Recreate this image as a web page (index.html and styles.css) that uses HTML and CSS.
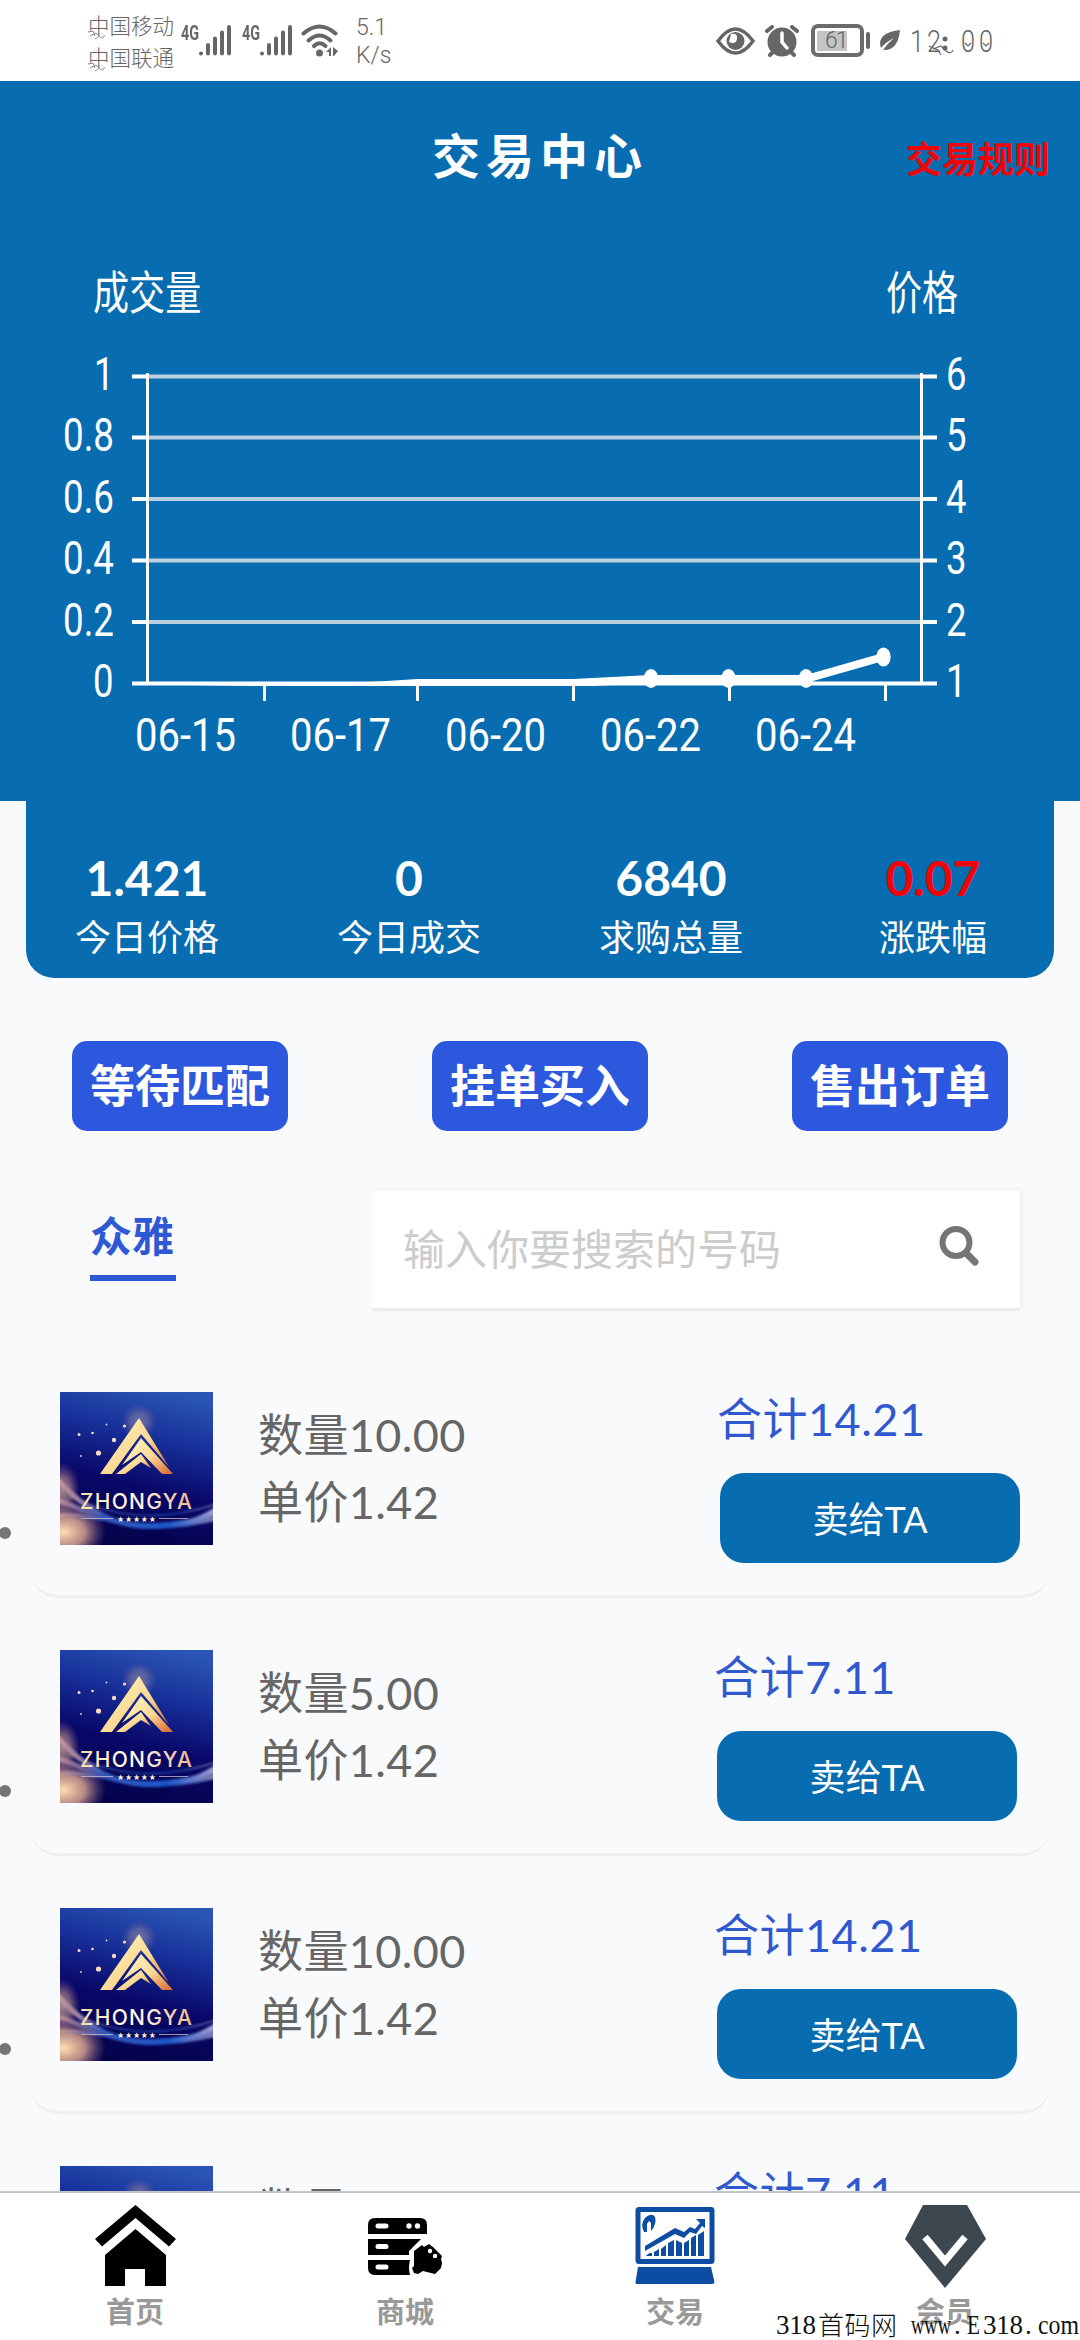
FILE: index.html
```html
<!DOCTYPE html>
<html lang="zh-CN">
<head>
<meta charset="utf-8">
<title>交易中心</title>
<link rel="stylesheet" href="styles.css">
</head>
<body>
<svg class="defs" width="0" height="0" aria-hidden="true">
  <defs>
    <linearGradient id="sky" x1="0.7" y1="0" x2="0.45" y2="1">
      <stop offset="0" stop-color="#2a55b4"/><stop offset=".3" stop-color="#17309a"/>
      <stop offset=".62" stop-color="#090869"/><stop offset="1" stop-color="#04034a"/>
    </linearGradient>
    <linearGradient id="gold" x1="0" y1="0" x2="1" y2="1">
      <stop offset="0" stop-color="#fff6c4"/><stop offset=".55" stop-color="#fbd992"/><stop offset="1" stop-color="#d9622f"/>
    </linearGradient>
    <linearGradient id="word" x1="0" y1="0" x2="1" y2="0">
      <stop offset="0" stop-color="#f3dfa0"/><stop offset=".45" stop-color="#fffdf2"/><stop offset="1" stop-color="#f2b98c"/>
    </linearGradient>
    <linearGradient id="wave" x1="0" y1="0" x2="1" y2="0">
      <stop offset="0" stop-color="#d99b94"/><stop offset=".3" stop-color="#3357b8"/>
      <stop offset=".7" stop-color="#1c57c8"/><stop offset="1" stop-color="#a9a0cf"/>
    </linearGradient>
    <radialGradient id="glow">
      <stop offset="0" stop-color="#ffe0b0"/><stop offset=".5" stop-color="#e2ab92" stop-opacity=".8"/>
      <stop offset="1" stop-color="#a06a90" stop-opacity="0"/>
    </radialGradient>
    <filter id="soft" x="-20%" y="-50%" width="140%" height="200%"><feGaussianBlur stdDeviation="1.3"/></filter>
    <symbol id="logo" viewBox="0 0 153 153">
      <rect width="153" height="153" fill="url(#sky)"/>
      <circle cx="79" cy="30" r="18" fill="url(#glow)" opacity=".35"/>
      <ellipse cx="2" cy="98" rx="18" ry="28" fill="url(#glow)" opacity=".6"/>
      <ellipse cx="4" cy="140" rx="42" ry="30" fill="url(#glow)"/>
      <g fill="none" stroke="url(#wave)" filter="url(#soft)">
        <path d="M-4 86C24 118 60 138 98 134S138 128 157 117" stroke-width="5"/>
        <path d="M-4 108C28 116 62 150 157 126" stroke-width="5" opacity=".8"/>
        <path d="M-4 124C34 118 82 148 157 121" stroke-width="3"/>
        <path d="M10 104C50 124 96 132 157 112" stroke-width="1.5" opacity=".7"/>
      </g>
      <g fill="#f5d9c0">
        <circle cx="54" cy="48" r="2.200"/><circle cx="38.500" cy="61" r="2.600"/><circle cx="19" cy="42.500" r="1.500"/>
        <circle cx="32.500" cy="41" r="1.300"/><circle cx="46.500" cy="32.500" r=".9"/><circle cx="64.500" cy="34" r="1.600"/><circle cx="21" cy="64" r=".9"/>
      </g>
      <path d="M79 26 40 82H52L81 42 109 75Z" fill="url(#gold)"/>
      <path d="M81 46 62 73 81 60 102 82H113Z" fill="url(#gold)"/>
      <path d="M56 82 81 62 91 76 81 70 65 82Z" fill="url(#gold)"/>
      <text x="20" y="117" class="logo-word" textLength="112" fill="url(#word)">ZHONGYA</text>
      <path d="M21 126.500H53M99 126.500H128" stroke="#c9b7c4" stroke-width=".8"/>
      <text x="57" y="130" class="logo-stars" textLength="39">★★★★★</text>
    </symbol>
    <symbol id="signal" viewBox="0 0 33 32">
      <path d="M3 28.500V28.600M10 20V28.600M17 13.500V28.600M24 7.500V28.600M31 2V28.600" fill="none" stroke="#666" stroke-width="4" stroke-linecap="round"/>
    </symbol>
  </defs>
</svg>

<div class="screen">
  <header class="status">
    <div class="carriers"><span>中国移动</span><span>中国联通</span>
      <svg class="flourish" width="22" height="62" viewBox="0 0 22 62"><path id="f" d="M1 19l5-1 2 5M3 23l6-3 3 3c2 3 6 2 5-1M8 26l3-2" fill="none" stroke="#888" stroke-width="1"/><use href="#f" y="32"/></svg>
    </div>
    <span class="gen">4G</span><svg class="signal" width="33" height="32"><use href="#signal"/></svg>
    <span class="gen second">4G</span><svg class="signal" width="33" height="32"><use href="#signal"/></svg>
    <svg class="wifi" width="38" height="33" viewBox="0 0 38 33">
      <g fill="none" stroke="#666" stroke-width="4" stroke-linecap="round"><path d="M2.500 9.500Q18.500-4.500 34.500 9.500"/><path d="M7.500 16.500Q18.500 6.500 29.500 16.500"/><path d="M13 22Q18.500 16.500 24.500 22"/></g>
      <circle cx="18.500" cy="29" r="3.500" fill="#666"/><path d="M25 28l5-5v9h-2v-4zM32 23l5 4-4 5h-1z" fill="#666"/>
    </svg>
    <div class="rate"><span>5.1</span><span>K/s</span></div>
    <svg class="eye" width="39" height="28" viewBox="0 0 39 28"><path d="M2 14Q19.500-10 37 14 19.500 38 2 14Z" fill="none" stroke="#666" stroke-width="3.500"/><circle cx="19.500" cy="14" r="9" fill="#666"/><path d="M15 7q7-1 6 5-1 6-8 3" fill="#fff"/></svg>
    <svg class="alarm" width="34" height="32" viewBox="0 0 34 32"><circle cx="17" cy="17" r="14.500" fill="#666"/><path d="M2 6l5-4M32 6l-5-4M5 30l4-4M29 30l-4-4" stroke="#666" stroke-width="4" stroke-linecap="round"/><path d="M17 8v9l5 6" fill="none" stroke="#fff" stroke-width="3.500" stroke-linecap="round"/></svg>
    <div class="battery"><span>61</span></div><i class="nub"></i>
    <svg class="leaf" width="22" height="23" viewBox="0 0 22 23"><path d="M21 1Q19 22 4 21 9 14 15 9 7 13 2 19-3 4 21 1Z" fill="#666"/></svg>
    <svg class="clock" width="90" height="40" viewBox="0 0 90 40">
      <g class="time"><text x="0" y="31" textLength="14" lengthAdjust="spacingAndGlyphs">1</text><text x="17" y="31" textLength="14" lengthAdjust="spacingAndGlyphs">2</text><text x="51" y="31" textLength="14" lengthAdjust="spacingAndGlyphs">0</text><text x="69" y="31" textLength="14" lengthAdjust="spacingAndGlyphs">0</text></g>
      <circle cx="35" cy="18" r="2.500" fill="#666"/><circle cx="35" cy="27" r="2.500" fill="#666"/>
      <path d="M19 25l9 4 3 5M23 28l8-3 5 5q5 4 7-1M55 22l3 3 3-3M73 22l3 3 3-3" fill="none" stroke="#666" stroke-width="1.200"/>
    </svg>
  </header>

  <main class="content">
    <section class="hero">
      <div class="title-row"><h1>交易中心</h1><a class="rules">交易规则</a></div>
      <svg class="chart" width="1080" height="572" viewBox="0 229 1080 572">
        <g transform="translate(93 309) scale(.785 1)"><text class="cjk">成交量</text></g>
        <g transform="translate(886 309) scale(.785 1)"><text class="cjk">价格</text></g>
        <path class="grid" d="M149 376.500H920M149 437.500H920M149 499H920M149 560.500H920M149 622H920"/>
        <path class="axis" d="M132 376.500H148M132 437.500H148M132 499H148M132 560.500H148M132 622H148M132 683.500H937M921 376.500H937M921 437.500H937M921 499H937M921 560.500H937M921 622H937"/>
        <path class="axis thin" d="M147.500 373V684M921.500 373V684M264.500 684V701M417.500 684V701M573.500 684V701M729.500 684V701M885.500 684V701"/>
        <clipPath id="plot"><rect x="149" y="373" width="772" height="313"/></clipPath>
        <path class="line" clip-path="url(#plot)" d="M186 690 340 688 418 683H573L651 679H806L883 657"/>
        <g fill="#fff"><ellipse cx="651" cy="678.500" rx="7.200" ry="9.500"/><ellipse cx="728.500" cy="678.500" rx="7.200" ry="9.500"/><ellipse cx="806" cy="678.500" rx="7.200" ry="9.500"/><ellipse cx="883.500" cy="657" rx="7.200" ry="9.500"/></g>
        <g class="num">
          <text x="94" y="389.500" textLength="20" lengthAdjust="spacingAndGlyphs">1</text>
          <text x="63" y="451" textLength="51" lengthAdjust="spacingAndGlyphs">0.8</text>
          <text x="63" y="512.500" textLength="51" lengthAdjust="spacingAndGlyphs">0.6</text>
          <text x="63" y="574" textLength="51" lengthAdjust="spacingAndGlyphs">0.4</text>
          <text x="63" y="635.500" textLength="51" lengthAdjust="spacingAndGlyphs">0.2</text>
          <text x="93" y="697" textLength="20.500" lengthAdjust="spacingAndGlyphs">0</text>
          <text x="946" y="389.500" textLength="20.500" lengthAdjust="spacingAndGlyphs">6</text>
          <text x="946" y="451" textLength="20.500" lengthAdjust="spacingAndGlyphs">5</text>
          <text x="946" y="512.500" textLength="20.500" lengthAdjust="spacingAndGlyphs">4</text>
          <text x="946" y="574" textLength="20.500" lengthAdjust="spacingAndGlyphs">3</text>
          <text x="946" y="635.500" textLength="20.500" lengthAdjust="spacingAndGlyphs">2</text>
          <text x="946" y="697" textLength="20.500" lengthAdjust="spacingAndGlyphs">1</text>
          <text x="135" y="751" textLength="101" lengthAdjust="spacingAndGlyphs">06-15</text>
          <text x="290" y="751" textLength="101" lengthAdjust="spacingAndGlyphs">06-17</text>
          <text x="445" y="751" textLength="101" lengthAdjust="spacingAndGlyphs">06-20</text>
          <text x="600" y="751" textLength="101" lengthAdjust="spacingAndGlyphs">06-22</text>
          <text x="755" y="751" textLength="101" lengthAdjust="spacingAndGlyphs">06-24</text>
        </g>
      </svg>
    </section>

    <section class="stats">
      <div><b>1.421</b><span>今日价格</span></div>
      <div><b>0</b><span>今日成交</span></div>
      <div><b>6840</b><span>求购总量</span></div>
      <div><b class="up">0.07</b><span>涨跌幅</span></div>
    </section>

    <nav class="actions"><a>等待匹配</a><a>挂单买入</a><a>售出订单</a></nav>

    <section class="filter">
      <span class="tab">众雅</span>
      <div class="search"><span>输入你要搜索的号码</span>
        <svg width="42" height="42" viewBox="0 0 42 42" fill="none" stroke="#757575"><circle cx="18" cy="17.500" r="13.500" stroke-width="6"/><path d="M28 28l9 9" stroke-width="7" stroke-linecap="round"/></svg>
      </div>
    </section>

    <ul class="orders">
      <li><svg class="logo" width="153" height="153"><use href="#logo"/></svg>
        <div class="info"><span>数量10.00</span><span>单价1.42</span></div>
        <div class="deal"><span>合计14.21</span><a>卖给TA</a></div></li>
      <li><svg class="logo" width="153" height="153"><use href="#logo"/></svg>
        <div class="info"><span>数量5.00</span><span>单价1.42</span></div>
        <div class="deal"><span>合计7.11</span><a>卖给TA</a></div></li>
      <li><svg class="logo" width="153" height="153"><use href="#logo"/></svg>
        <div class="info"><span>数量10.00</span><span>单价1.42</span></div>
        <div class="deal"><span>合计14.21</span><a>卖给TA</a></div></li>
      <li><svg class="logo" width="153" height="153"><use href="#logo"/></svg>
        <div class="info"><span>数量5.00</span><span>单价1.42</span></div>
        <div class="deal"><span>合计7.11</span><a>卖给TA</a></div></li>
    </ul>
  </main>

  <nav class="tabbar">
    <a><svg width="90" height="90" viewBox="0 0 90 90"><path d="M45.500 5 86 39 79 46.500 45.500 18 12 46.500 5 39Z"/><path d="M45.500 29 76 55V86H55V69H35V86H15V55Z"/></svg><span>首页</span></a>
    <a><svg width="90" height="90" viewBox="0 0 90 90">
      <path d="M15 18h45q7 0 7 7v9H8v-9q0-7 7-7zM8 39h53L49 51v4H8zM8 60h42q-2 8 0 15H15q-7 0-7-7z"/>
      <path d="M54 51l8-6 2 2 5-3 4 3 9 9-1 3 1 4-1 5-6 6-12-3-5 3-4-1-2-5 2-2z"/>
      <path d="M18 26h8M18 46.500h8M18 67h8" stroke="#fff" stroke-width="5" stroke-linecap="round"/>
      <g fill="#fff"><circle cx="49" cy="26" r="2.700"/><circle cx="57.500" cy="26" r="2.700"/><circle cx="70" cy="51" r="2.200"/><circle cx="75" cy="56" r="2.200"/></g></svg><span>商城</span></a>
    <a><svg width="90" height="90" viewBox="0 0 90 90" fill="#0c4ca3">
      <rect x="8" y="9.500" width="74" height="52" rx="1" fill="none" stroke="#0c4ca3" stroke-width="5"/>
      <path d="M8 67H81L84.500 82Q84.500 84 82 84H7Q5 84 5.500 82Z"/>
      <path d="M14 32Q10 24 15 18 22 12 25 17 27 24 21 31V23L19 21 17 24V32Z"/>
      <path d="M15 46 45 28 54 32 60 27 65 29 70 23 66 19H75V28L72 26 66 34 60 32 54 38 45 34 15 51Z"/>
      <path d="M16 56q4-4 6-3v3zM24 52l5-3v7h-5zM31 49l5-4v11h-5zM38 43l6-3v16h-6zM46 40l6 3v13h-6zM54 43l5-3v16h-5zM61 38l5-3v21h-5zM68 35l6-4v25h-6z"/></svg><span>交易</span></a>
    <a><svg width="90" height="90" viewBox="0 0 90 90"><path d="M23 5H67L86 39 45 88 5 39Z" fill="#3c474f"/><path d="M25 37 45 61 65 37" fill="none" stroke="#fff" stroke-width="7"/></svg><span>会员</span></a>
    <svg class="watermark" width="304" height="32" viewBox="0 0 304 32">
      <text x="0" y="26" textLength="40">318</text>
      <text x="42" y="27" class="zh" textLength="79">首码网</text>
      <text x="135" y="26" textLength="40" lengthAdjust="spacingAndGlyphs">www</text>
      <text x="178" y="26">.</text>
      <text x="191" y="26" textLength="13" lengthAdjust="spacingAndGlyphs">E</text>
      <text x="207" y="26" textLength="40">318</text>
      <text x="249" y="26">.</text>
      <text x="262" y="26" textLength="41" lengthAdjust="spacingAndGlyphs">com</text>
    </svg>
  </nav>
</div>
</body>
</html>
```
FILE: styles.css
```css
* { box-sizing: border-box; }
body { margin: 0; background: #f9fafc; font-family: Lato, "Noto Sans CJK SC", sans-serif; }
.defs { position: absolute; }
.screen { width: 1080px; height: 2340px; display: flex; flex-direction: column; overflow: hidden; }

/* status bar */
.status { flex: none; height: 81px; background: #fff; color: #666; display: flex; align-items: center; padding-left: 88px; }
.status > * { flex: none; }
.carriers { position: relative; width: 88px; display: flex; flex-direction: column; font: 300 21.5px/32px "Noto Sans CJK SC", sans-serif; }
.flourish { position: absolute; left: -1px; top: 4px; }
.gen { margin-left: 5px; width: 17px; font: bold 20px/20px Roboto, sans-serif; transform: scaleX(.72); transform-origin: 0 50%; margin-top: -16px; }
.gen.second { margin-left: 11px; }
.signal { display: block; }
.wifi { margin-left: 9px; }
.rate { margin-left: 17px; width: 37px; display: flex; flex-direction: column; font: 300 23px/28px Roboto, sans-serif; padding-top: 3px; }
.eye { margin-left: 323px; }
.alarm { margin-left: 10px; }
.battery { margin-left: 12px; width: 53px; height: 33px; border: 4px solid #6b6b6b; border-radius: 7px; background: linear-gradient(90deg, #c4c4c4 30px, #fff 30px) 2px 3px / 45px 20px no-repeat; display: flex; align-items: center; padding-left: 10px; }
.battery span { font: 300 23px/24px Roboto, sans-serif; width: 28px; letter-spacing: -2px; white-space: nowrap; }
.nub { margin-left: 2px; width: 4px; height: 17px; border-radius: 2px; background: #666; }
.leaf { margin-left: 9px; }
.clock { margin-left: 9px; }
.time { font: 300 32px Roboto, sans-serif; fill: #666; }

.content { flex: 1; min-height: 0; overflow: hidden; }

/* header and chart */
.hero { background: #076cb0; color: #fff; height: 720px; }
.title-row { height: 148px; display: grid; grid-template-columns: 1fr auto 1fr; align-items: center; }
.title-row h1 { grid-column: 2; margin: 0; padding-bottom: 4px; font: bold 48px/72px "Noto Sans CJK SC", sans-serif; letter-spacing: 6px; }
.rules { justify-self: end; padding: 3px 30px 0 0; color: #f00408; font: bold 36px/54px "Noto Sans CJK SC", sans-serif; }
.chart { display: block; fill: #fff; }
.chart .cjk { font: 46px "Noto Sans CJK SC", sans-serif; }
.chart .num { font: 46px Roboto, sans-serif; }
.grid { stroke: #bccfde; stroke-width: 4; }
.axis { stroke: #fff; stroke-width: 4; }
.axis.thin { stroke-width: 3; }
.line { fill: none; stroke: #fff; stroke-width: 8; stroke-linejoin: round; }

/* daily figures */
.stats { margin: 0 26px; height: 177px; padding-top: 47px; border-radius: 0 0 28px 28px; background: #076cb0; color: #fff; display: grid; grid-template-columns: repeat(4, 262px); justify-content: center; }
.stats div { display: flex; flex-direction: column; align-items: center; }
.stats b { font-size: 48px; line-height: 60px; }
.stats span { font-size: 36px; line-height: 54px; padding-top: 2px; }
.stats .up { color: #f00408; }

.actions { display: flex; justify-content: space-between; padding: 63px 72px 0; }
.actions a { width: 216px; height: 90px; border-radius: 15px; background: #2c58dd; color: #fff; text-align: center; font: bold 45px/86px "Noto Sans CJK SC", sans-serif; }

.filter { display: flex; justify-content: space-between; align-items: flex-start; padding: 60px 60px 0 90px; height: 209px; }
.tab { margin-top: 3px; width: 86px; height: 87px; border-bottom: 6px solid #2f58d4; color: #2f58d4; font: bold 42px/79px "Noto Sans CJK SC", sans-serif; }
.search { width: 648px; height: 117px; background: #fff; display: flex; align-items: center; justify-content: space-between; padding: 0 40px 7px 31px; box-shadow: 3px -2px 6px rgba(0,0,0,.04), 0 3px 1px rgba(0,0,0,.05); }
.search span { color: #ccc; font-size: 42px; }

/* order list */
.orders { list-style: none; margin: 0; padding: 0; }
.orders li { position: relative; height: 258px; margin: 0 30px; border-bottom: 3px solid #eeeff1; border-radius: 0 0 28px 28px; display: flex; align-items: flex-start; padding: 52px 0 0 30px; }
.orders li::before { content: ""; position: absolute; left: -31px; top: 187px; width: 12px; height: 12px; border-radius: 50%; background: #757575; }
.logo { flex: none; }
.logo-word { font: 500 21px Inter, sans-serif; }
.logo-stars { font: 8px "DejaVu Sans", sans-serif; fill: #fff2dc; }
.info { margin-left: 45px; padding-top: 10px; width: 462px; display: flex; flex-direction: column; font-size: 45px; line-height: 67px; letter-spacing: .4px; color: #666; }
.deal { width: 300px; display: flex; flex-direction: column; margin-top: -6px; }
.deal span { font-size: 45px; line-height: 67px; letter-spacing: .5px; color: #3058cf; margin-left: -3px; }
.deal a { margin-top: 20px; height: 90px; border-radius: 24px; background: #076cb0; color: #fff; text-align: center; font-size: 36px; line-height: 92px; }
.orders li + li .info { width: 459px; }

/* bottom tabs */
.tabbar { position: relative; flex: none; height: 149px; border-top: 2px solid #c6c6c9; background: #fff; display: grid; grid-template-columns: repeat(4, 270px); }
.tabbar a { display: flex; flex-direction: column; align-items: center; padding-top: 7px; }
.tabbar a span { color: #999; font: bold 29px/44px "Noto Sans CJK SC", sans-serif; margin-top: -2px; }
.watermark { position: absolute; right: 0; bottom: 0; font: 27px "Liberation Serif", serif; fill: #111; }
.watermark .zh { font: 300 26px "Noto Sans CJK SC", sans-serif; }
```
